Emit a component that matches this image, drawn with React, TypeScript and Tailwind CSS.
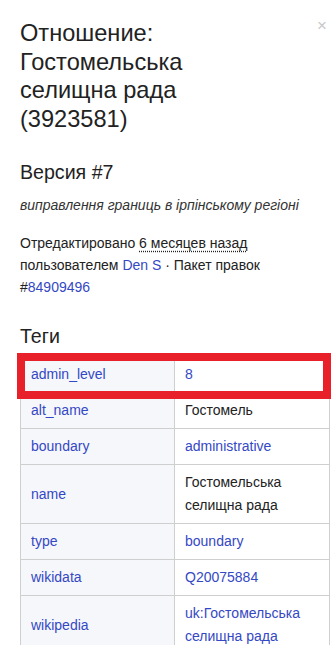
import React from "react";

const rows: { k: string; v: string[]; link: boolean }[] = [
  { k: "admin_level", v: ["8"], link: true },
  { k: "alt_name", v: ["Гостомель"], link: false },
  { k: "boundary", v: ["administrative"], link: true },
  { k: "name", v: ["Гостомельська", "селищна рада"], link: false },
  { k: "type", v: ["boundary"], link: true },
  { k: "wikidata", v: ["Q20075884"], link: true },
  { k: "wikipedia", v: ["uk:Гостомельська", "селищна рада"], link: true },
];

export default function App() {
  return (
    <div
      className="relative w-[331px] h-[645px] overflow-hidden bg-white text-[#222]"
      style={{ fontFamily: '"Liberation Sans", Arial, sans-serif' }}
    >
      <div className="absolute right-[4px] top-[17px] text-[#c8c8c8] text-[17px] leading-none">×</div>
      <div className="pl-[20px] pt-[19px]">
        <h2 className="text-[23.6px] leading-[28.5px] font-normal">
          Отношение:
          <br />
          Гостомельська
          <br />
          селищна рада
          <br />
          (3923581)
        </h2>
        <h3 className="mt-[27px] text-[19.6px] leading-[24px]">Версия #7</h3>
        <p className="mt-[11px] text-[14px] leading-[20px] italic text-[#333]">
          виправлення границь в ірпінському регіоні
        </p>
        <p className="mt-[17px] text-[14px] leading-[22px] text-[#222] pr-[20px]">
          Отредактировано{" "}
          <span className="underline decoration-dotted underline-offset-[3px]">6 месяцев назад</span>
          <br />
          пользователем <span className="text-[#3448c5]">Den S</span> · Пакет правок
          <br />#<span className="text-[#3448c5]">84909496</span>
        </p>
        <h3 className="mt-[26px] text-[19.6px] leading-[24px]">Теги</h3>
        <div className="relative mt-[8px] w-[310px] border-t border-l border-r border-[#cfcfcf] text-[14px]">
          {rows.map((r) => (
            <div key={r.k} className="flex border-b border-[#cfcfcf]">
              <div className="w-[154px] shrink-0 bg-[#f6f7fb] border-r border-[#cfcfcf] px-[10px] flex items-center text-[#3448c5] leading-[23px] py-[6px]">
                {r.k}
              </div>
              <div className={`flex-1 px-[10px] py-[6px] leading-[23px] ${r.link ? "text-[#3448c5]" : "text-[#222]"}`}>
                {r.v.map((t, i) => (
                  <div key={i}>{t}</div>
                ))}
              </div>
            </div>
          ))}
          <div className="absolute left-[-4px] top-[-4px] w-[314px] h-[46px] border-[8px] border-[#e8202a]" />
        </div>
      </div>
    </div>
  );
}
